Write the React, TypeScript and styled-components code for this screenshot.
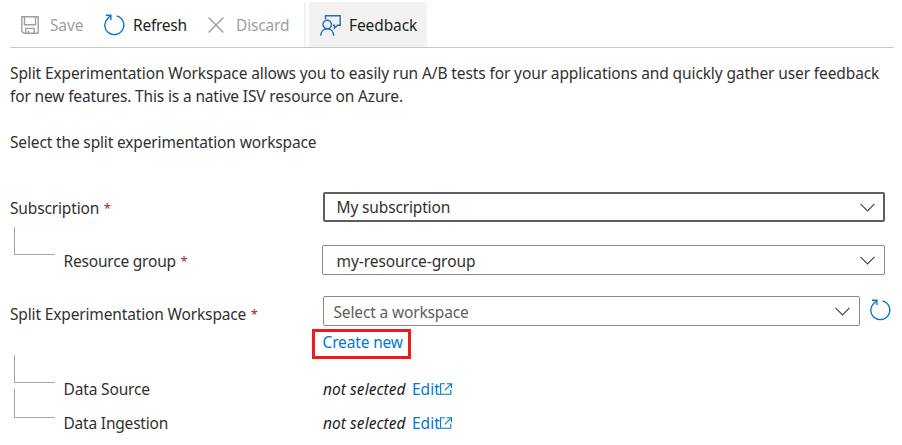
import React from "react";
import styled, { createGlobalStyle } from "styled-components";

const GlobalStyle = createGlobalStyle`
  * { box-sizing: border-box; }
  body {
    margin: 0;
    background: #fff;
    color: #323130;
    font: 15.5px/22px "Noto Sans", "Open Sans", sans-serif;
    overflow: hidden;
  }
`;

const Page = styled.main`
  width: 902px;
  height: 445px;
  padding: 2px 8px 0 10px;
`;

const Toolbar = styled.div`
  display: flex;
  height: 46px;
  border-bottom: 1px solid #c8c6c4;
`;

const Command = styled.button<{ $width: number; $gap: number; $pad?: number; $muted?: boolean; $active?: boolean }>`
  display: flex;
  align-items: center;
  flex: none;
  width: ${(p) => p.$width}px;
  gap: ${(p) => p.$gap}px;
  padding: 1px 0 0 ${(p) => p.$pad ?? 0}px;
  border: 0;
  font: inherit;
  color: ${(p) => (p.$muted ? "#a19f9d" : "#201f1e")};
  background: ${(p) => (p.$active ? "#f3f2f1" : "transparent")};
  svg { flex: none; }
`;

const Divider = styled.span`
  width: 2px;
  margin-right: 3px;
  background: #f3f2f1;
`;

const Text = styled.span<{ $track?: number }>`
  white-space: nowrap;
  letter-spacing: ${(p) => p.$track ?? -0.15}px;
`;

const Intro = styled.p`
  display: flex;
  flex-direction: column;
  margin: 14px 0 0;
  line-height: 23px;
`;

const Prompt = styled.p`
  margin: 23px 0 0;
`;

const Form = styled.div`
  margin-top: 27px;
`;

const Row = styled.div<{ $height: number }>`
  display: grid;
  grid-template-columns: 312px 1fr;
  height: ${(p) => p.$height}px;
`;

const Label = styled.div<{ $top: number }>`
  display: flex;
  align-items: flex-start;
  padding-top: ${(p) => p.$top}px;
`;

const Required = styled.span`
  margin-left: 4.5px;
  color: #a4262c;
  font-size: 13px;
`;

const Elbow = styled.span<{ $lift: number; $height: number }>`
  flex: none;
  width: 41px;
  height: ${(p) => p.$height}px;
  margin: -${(p) => p.$lift}px 8.5px 0 4px;
  border: solid #a6a5a4;
  border-width: 0 0 1px 1px;
`;

const Control = styled.div<{ $top?: number; $indent?: number }>`
  display: flex;
  align-items: flex-start;
  padding: ${(p) => p.$top ?? 0}px 0 0 ${(p) => p.$indent ?? 1}px;
`;

const Select = styled.div<{ $width: number; $focused?: boolean; $empty?: boolean }>`
  display: flex;
  align-items: center;
  justify-content: space-between;
  width: ${(p) => p.$width}px;
  height: 30px;
  padding: 0 ${(p) => (p.$focused ? 8 : 9)}px 0 ${(p) => (p.$empty ? 9.5 : p.$focused ? 11.5 : 13.5)}px;
  border: ${(p) => (p.$focused ? "2px solid #605e5c" : "1px solid #8a8886")};
  border-radius: 2px;
  color: ${(p) => (p.$empty ? "#605e5c" : "#323130")};
`;

const SelectValue = styled(Text)<{ $above?: number; $below?: number }>`
  padding: ${(p) => p.$above ?? 0}px 0 ${(p) => p.$below ?? 0}px;
`;

const RefreshButton = styled.span`
  display: flex;
  margin: 3px 0 0 9px;
`;

const Link = styled.a`
  display: inline-flex;
  align-items: center;
  color: #0078d4;
`;

const Highlight = styled.div`
  display: flex;
  align-items: flex-start;
  width: 99px;
  height: 30px;
  margin: 3px 0 0 302px;
  padding: 0 0 0 7.5px;
  border: 3px solid #ec1c1c;
  line-height: 21px;
`;

const Status = styled.em`
  width: 89px;
  color: #201f1e;
`;

const SaveIcon = () => (
  <svg width="18" height="18" viewBox="0 0 18 18" fill="none" stroke="#a19f9d" strokeWidth="1.4">
    <path d="M.8.8h16.4v16.4H2.8L.8 15.2z M3.5.8v8h11v-8 M4.8 17v-4.6h8.4v4.6 M7.5 17v-2.6" />
  </svg>
);

const RefreshIcon = () => (
  <svg width="22" height="22" viewBox="0 0 22 22" fill="none" stroke="#0078d4" strokeWidth="1.4">
    <path d="M13.6 1.9A9.5 9.5 0 1 1 4.6 4.4L7.8 1.4 M3 1.3h4.9v4.6" />
  </svg>
);

const DiscardIcon = () => (
  <svg width="16" height="16" viewBox="0 0 16 16" fill="none" stroke="#a19f9d" strokeWidth="1.4">
    <path d="M.6.6l14.8 14.8M15.4.6L.6 15.4" />
  </svg>
);

const FeedbackIcon = () => (
  <svg width="21" height="21" viewBox="0 0 21 21" fill="none" stroke="#1b6ec2" strokeWidth="1.4">
    <path d="M5.5 4V.8h14.7v9.4h-2.6L14.5 13.2v-3h-1.7" />
    <circle cx="7.2" cy="9.5" r="4.2" />
    <path d="M.8 20.7c0-4.2 2.7-7 6.4-7s6.4 2.8 6.4 7" />
  </svg>
);

const Chevron = () => (
  <svg width="15" height="9" viewBox="0 0 15 9" fill="none" stroke="#484644" strokeWidth="1.2">
    <path d="M.5.8l7 7 7-7" />
  </svg>
);

const ExternalIcon = () => (
  <svg width="12" height="12" viewBox="0 0 12 12" fill="none" stroke="#0078d4" strokeWidth="1.1">
    <path d="M4.8.8H.6v10.4h10.2V6.7 M6.8.7h4.6v4.6 M11.2.9L4.8 7.3" />
  </svg>
);

const EditValue = () => (
  <>
    <Status><Text $track={0.06}>not selected</Text></Status>
    <Link><Text $track={0}>Edit</Text><ExternalIcon /></Link>
  </>
);

export default function App() {
  return (
    <Page>
      <GlobalStyle />
      <Toolbar>
        <Command $width={93} $pad={11} $gap={11} $muted><SaveIcon /><Text>Save</Text></Command>
        <Command $width={104} $gap={8}><RefreshIcon /><Text $track={-0.25}>Refresh</Text></Command>
        <Command $width={97} $pad={1} $gap={12} $muted><DiscardIcon /><Text>Discard</Text></Command>
        <Divider />
        <Command $width={118} $pad={11} $gap={8} $active><FeedbackIcon /><Text $track={-0.1}>Feedback</Text></Command>
      </Toolbar>
      <Intro>
        <Text $track={-0.115}>Split Experimentation Workspace allows you to easily run A/B tests for your applications and quickly gather user feedback</Text>
        <Text>for new features. This is a native ISV resource on Azure.</Text>
      </Intro>
      <Prompt><Text>Select the split experimentation workspace</Text></Prompt>
      <Form>
        <Row $height={53}>
          <Label $top={17}><Text>Subscription</Text><Required>*</Required></Label>
          <Control $top={12}><Select $width={562} $focused><SelectValue $below={1}>My subscription</SelectValue><Chevron /></Select></Control>
        </Row>
        <Row $height={53}>
          <Label $top={17}><Elbow $lift={23} $height={28} /><Text $track={-0.2}>Resource group</Text><Required>*</Required></Label>
          <Control $top={12} $indent={0}><Select $width={563}><SelectValue $track={-0.06} $above={2}>my-resource-group</SelectValue><Chevron /></Select></Control>
        </Row>
        <Row $height={40}>
          <Label $top={17}><Text>Split Experimentation Workspace</Text><Required>*</Required></Label>
          <Control $top={10}>
            <Select $width={537} $empty><SelectValue $above={1}>Select a workspace</SelectValue><Chevron /></Select>
            <RefreshButton><RefreshIcon /></RefreshButton>
          </Control>
        </Row>
        <Highlight><Link><Text>Create new</Text></Link></Highlight>
        <Row $height={34}>
          <Label $top={19}><Elbow $lift={23} $height={28} /><Text>Data Source</Text></Label>
          <Control $top={19}><EditValue /></Control>
        </Row>
        <Row $height={34}>
          <Label $top={19}><Elbow $lift={23} $height={29} /><Text $track={-0.2}>Data Ingestion</Text></Label>
          <Control $top={19}><EditValue /></Control>
        </Row>
      </Form>
    </Page>
  );
}
